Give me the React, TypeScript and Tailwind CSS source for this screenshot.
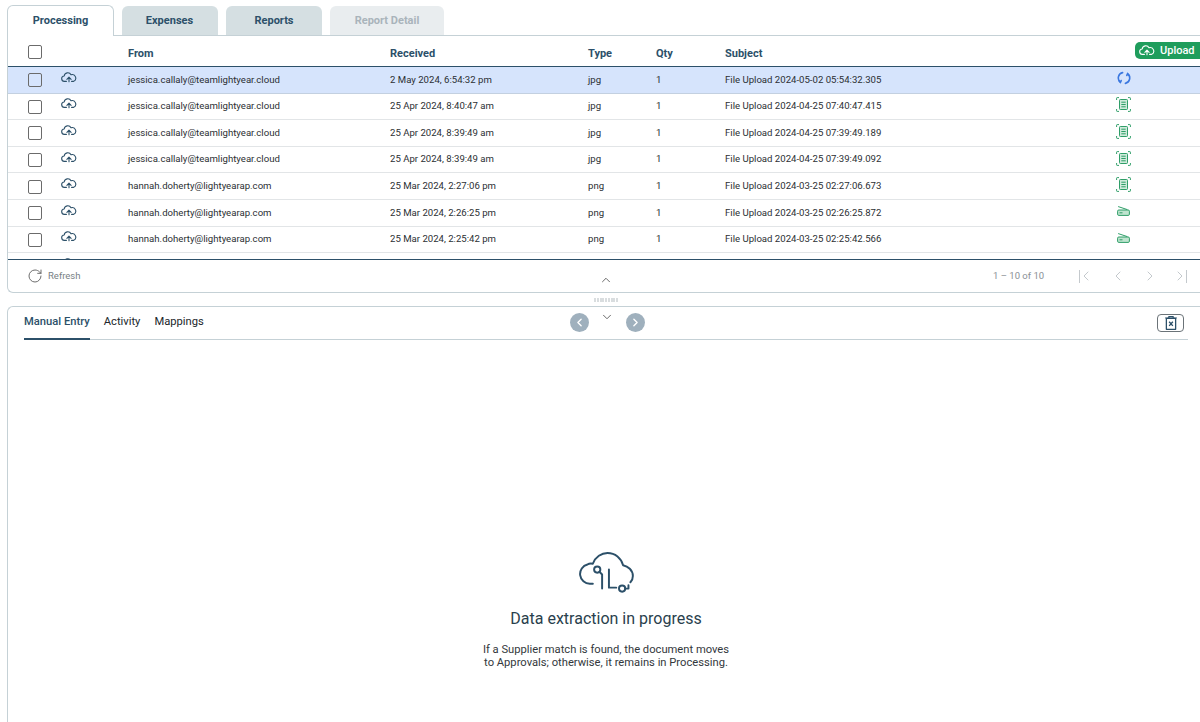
import React from "react";
import { ChevronDown, ChevronLeft, ChevronRight, ChevronUp, RotateCw } from "lucide-react";

const rows = [
  { from: "jessica.callaly@teamlightyear.cloud", received: "2 May 2024, 6:54:32 pm", type: "jpg", subject: "File Upload 2024-05-02 05:54:32.305", status: "sync" },
  { from: "jessica.callaly@teamlightyear.cloud", received: "25 Apr 2024, 8:40:47 am", type: "jpg", subject: "File Upload 2024-04-25 07:40:47.415", status: "doc" },
  { from: "jessica.callaly@teamlightyear.cloud", received: "25 Apr 2024, 8:39:49 am", type: "jpg", subject: "File Upload 2024-04-25 07:39:49.189", status: "doc" },
  { from: "jessica.callaly@teamlightyear.cloud", received: "25 Apr 2024, 8:39:49 am", type: "jpg", subject: "File Upload 2024-04-25 07:39:49.092", status: "doc" },
  { from: "hannah.doherty@lightyearap.com", received: "25 Mar 2024, 2:27:06 pm", type: "png", subject: "File Upload 2024-03-25 02:27:06.673", status: "doc" },
  { from: "hannah.doherty@lightyearap.com", received: "25 Mar 2024, 2:26:25 pm", type: "png", subject: "File Upload 2024-03-25 02:26:25.872", status: "scan" },
  { from: "hannah.doherty@lightyearap.com", received: "25 Mar 2024, 2:25:42 pm", type: "png", subject: "File Upload 2024-03-25 02:25:42.566", status: "scan" },
];

const gridCols = "grid grid-cols-[33px_67px_262px_198px_68px_69px_385px_1fr] items-center pl-[20px]";

function CloudUp({ className }: { className?: string }) {
  return (
    <svg viewBox="0 0 16 13" fill="none" stroke="currentColor" strokeWidth="1.1" strokeLinecap="round" strokeLinejoin="round" className={className}>
      <path d="M5.4 10.400H3.600A2.700 2.700 0 0 1 3.200 5 3.600 3.600 0 0 1 10 3.800 3.300 3.300 0 0 1 12.400 10.400H10.600" />
      <path d="M8 10.800V6.400M5.900 8.400 8 6.200l2.100 2.200" />
    </svg>
  );
}

function SyncIcon() {
  return (
    <svg viewBox="0 0 14 14" fill="none" stroke="#3b78e0" strokeWidth="1.600" strokeLinecap="round" className="w-[14px] h-[14px]">
      <path d="M5.600 1.600A5.400 5.400 0 0 0 3 10.800" />
      <path d="M8.400 12.400A5.400 5.400 0 0 0 11 3.200" />
      <path d="M1.900 9.800 3.400 11.400l.8-1.800M12.100 4.200 10.600 2.600 9.800 4.400" />
    </svg>
  );
}

function DocIcon() {
  return (
    <svg viewBox="0 0 15 15" fill="none" stroke="#2f9e68" strokeWidth="1" className="w-[15px] h-[15px]">
      <path d="M.6 3V1.200q0-.6.6-.6H3M12 .6h1.800q.6 0 .6.6V3M14.400 12v1.800q0 .6-.6.6H12M3 14.400H1.200q-.6 0-.6-.6V12" />
      <rect x="3.500" y="2.500" width="8" height="10" rx="0.800" fill="#cfeadb" />
      <path d="M5.300 5.200h4.400M5.300 7.500h4.400M5.300 9.800h4.400" />
    </svg>
  );
}

function ScanIcon() {
  return (
    <svg viewBox="0 0 13 10" fill="none" stroke="#2f9e68" className="w-[13px] h-[10px]">
      <path d="M1.500.7 10 3.500" strokeWidth="1" strokeLinecap="round" />
      <rect x="0.600" y="4" width="11.800" height="5.400" rx="1.200" fill="#bfe4cf" strokeWidth="1" />
      <path d="M2.500 6.800h3" strokeWidth="1" />
    </svg>
  );
}

function BigCloud() {
  return (
    <svg viewBox="0 0 56 42" fill="none" stroke="#2c5069" strokeWidth="2" strokeLinecap="round" strokeLinejoin="round" className="w-[55px] h-[41px]">
      <path d="M14 32.500H11A10 10 0 0 1 8.500 12.800C10 11.800 12 11.500 14 12 16.500 5 23 1 29 1 37 1 43 6.500 45 13.500 50 14.500 55 18.500 55 24.500 55 27 54 29.500 52.500 31" />
      <circle cx="18.500" cy="18" r="3.200" />
      <path d="M21 20.500 23.500 23V37.500" />
      <path d="M30.500 18V36.500H38" />
      <circle cx="44" cy="37.500" r="3.200" />
      <path d="M47.200 37.500H50.500V34" />
    </svg>
  );
}

function TrashX() {
  return (
    <svg viewBox="0 0 11 13" fill="none" stroke="#2c5069" className="w-[12px] h-[14px]">
      <path d="M0 1.800h11M3.500 1.500V.5h4v1" strokeWidth="1" />
      <rect x="1.200" y="2.300" width="8.600" height="10.200" rx="0.500" strokeWidth="1.200" />
      <path d="M3.800 5.400 7.200 9.200M7.200 5.400 3.800 9.200" strokeWidth="1.300" />
    </svg>
  );
}

function Checkbox({ className }: { className?: string }) {
  return <span className={"block w-[14px] h-[14px] rounded-[2px] border border-[#6b6b6b] bg-transparent " + (className ?? "")} />;
}

function Tab({ label, className }: { label: string; className: string }) {
  return (
    <div className={"flex items-center justify-center rounded-t-[6px] text-[11px] font-bold " + className}>
      {label}
    </div>
  );
}

function Row({ row, selected }: { row: (typeof rows)[number]; selected: boolean }) {
  return (
    <div className={gridCols + " h-[26.6px] shrink-0 border-b text-[9.6px] text-[#2b2f33] " + (selected ? "bg-[#d6e4fc] border-[#c3d0e0]" : "border-[#e2e5e7]")}>
      <Checkbox className="mt-[1px]" />
      <CloudUp className="w-[16px] h-[13px] text-[#2c5069] mt-[-5px]" />
      <span>{row.from}</span>
      <span>{row.received}</span>
      <span>{row.type}</span>
      <span>1</span>
      <span>{row.subject}</span>
      <span className="flex w-[27px] justify-center mt-[-3px]">
        {row.status === "sync" && <SyncIcon />}
        {row.status === "doc" && <DocIcon />}
        {row.status === "scan" && <ScanIcon />}
      </span>
    </div>
  );
}

export default function App() {
  return (
    <div className="w-[1200px] h-[722px] overflow-hidden bg-white pl-[7px] pt-[5px] font-['Roboto',sans-serif] text-[#2c5069]">
      {/* tabs */}
      <div className="flex h-[31px] items-end border-b border-[#c5d1d6]">
        <Tab label="Processing" className="w-[107px] h-[31px] -mb-px bg-white border border-b-0 border-[#c5d1d6]" />
        <Tab label="Expenses" className="ml-[8px] w-[96px] h-[29px] pt-[2px] pr-[1px] bg-[#d5dfe2]" />
        <Tab label="Reports" className="ml-[8px] w-[96px] h-[29px] pt-[2px] bg-[#d5dfe2]" />
        <Tab label="Report Detail" className="ml-[8px] w-[114px] h-[29px] pt-[2px] bg-[#e9edef] text-[#a9b4bb]" />
      </div>

      {/* table */}
      <div className="h-[257px] rounded-bl-[6px] border-l border-b border-[#c5d1d6] flex flex-col">
        <div className={gridCols + " relative h-[31px] shrink-0 border-b border-[#2c5069] pt-[7px] text-[11px] font-bold"}>
          <Checkbox className="mt-[-5px]" />
          <span />
          <span>From</span>
          <span>Received</span>
          <span>Type</span>
          <span>Qty</span>
          <span>Subject</span>
          <div className="absolute right-0 top-[6px] flex h-[17px] w-[65px] items-center gap-[5px] rounded-l-[5px] bg-[#1f9d5c] pl-[4px] text-[11px] font-medium text-white">
            <CloudUp className="w-[16px] h-[13px]" />
            <span className="mt-[1px]">Upload</span>
          </div>
        </div>
        <div className="flex h-[193px] shrink-0 flex-col overflow-hidden border-b border-[#2c5069]">
          {rows.map((row, i) => (
            <Row key={i} row={row} selected={i === 0} />
          ))}
          {/* next row just peeks out of the scroll area */}
          <div className={gridCols + " h-[26.6px] shrink-0"}>
            <span />
            <CloudUp className="w-[16px] h-[13px] text-[#2c5069] mt-[-5px]" />
          </div>
        </div>
        <div className="flex flex-1 items-center pl-[19px] text-[9.5px] text-[#777f85]">
          <RotateCw className="w-[16px] h-[16px] text-[#6e6e6e]" strokeWidth={1.500} />
          <span className="ml-[5px] mt-[1px] w-[40px]">Refresh</span>
          <ChevronUp className="ml-[511px] mt-[7px] w-[14px] h-[14px] text-[#555]" strokeWidth={1.500} />
          <span className="ml-[380px] text-[#8a9095]">1 – 10 of 10</span>
          <div className="ml-[34px] flex items-center gap-[16px] text-[#c4c9cd]">
            <span className="flex w-[16px] items-center justify-center">
              <span className="h-[13px] w-px shrink-0 bg-[#c4c9cd]" />
              <ChevronLeft className="w-[16px] h-[16px] shrink-0 -ml-[2px]" strokeWidth={1.500} />
            </span>
            <ChevronLeft className="w-[16px] h-[16px]" strokeWidth={1.500} />
            <ChevronRight className="w-[16px] h-[16px]" strokeWidth={1.500} />
            <span className="-ml-[3px] flex w-[16px] items-center justify-center">
              <ChevronRight className="w-[16px] h-[16px] shrink-0 -mr-[2px]" strokeWidth={1.500} />
              <span className="h-[13px] w-px shrink-0 bg-[#c4c9cd]" />
            </span>
          </div>
        </div>
      </div>

      {/* splitter */}
      <div className="flex h-[13px] items-center justify-center pl-[5px]">
        <div className="flex gap-[0.75px]">
          {Array.from({ length: 9 }).map((_, i) => (
            <span key={i} className="h-[4px] w-[2px] bg-[#d9dddf]" />
          ))}
        </div>
      </div>

      {/* detail panel */}
      <div className="h-[420px] rounded-tl-[6px] border-l border-t border-[#c5d1d6] pl-[16px] flex flex-col">
        <div className="flex h-[33px] w-[1164px] shrink-0 items-stretch border-b border-[#c5d1d6] text-[11.2px] text-[#20262b]">
          <div className="flex h-[33px] items-center border-b-2 border-[#2c5069] font-medium text-[#2c5069]">Manual Entry</div>
          <div className="ml-[14px] flex items-center pb-[2px]">Activity</div>
          <div className="ml-[14px] flex items-center pb-[2px]">Mappings</div>
          <div className="ml-[366px] mt-[6px] flex h-[19px] items-start">
            <span className="flex h-[19px] w-[19px] items-center justify-center rounded-full bg-[#9fb0bd] text-white">
              <ChevronLeft className="w-[13px] h-[13px]" strokeWidth={2.500} />
            </span>
            <ChevronDown className="ml-[11px] mr-[12px] mt-[-3px] w-[14px] h-[14px] text-[#555]" strokeWidth={1.500} />
            <span className="flex h-[19px] w-[19px] items-center justify-center rounded-full bg-[#9fb0bd] text-white">
              <ChevronRight className="w-[13px] h-[13px]" strokeWidth={2.500} />
            </span>
          </div>
          <div className="ml-auto mr-[4px] mt-[7px] flex h-[18px] w-[27px] items-center justify-center rounded-[4px] border border-[#6b7378]">
            <TrashX />
          </div>
        </div>
        <div className="flex w-[1164px] flex-col items-center pt-[212px]">
          <BigCloud />
          <div className="mt-[16px] text-[16px] leading-[20px] text-[#2a3f4d]">Data extraction in progress</div>
          <div className="mt-[15px] text-center text-[11.2px] leading-[12.500px] text-[#33383c]">
            If a Supplier match is found, the document moves
            <br />
            to Approvals; otherwise, it remains in Processing.
          </div>
        </div>
      </div>
    </div>
  );
}
